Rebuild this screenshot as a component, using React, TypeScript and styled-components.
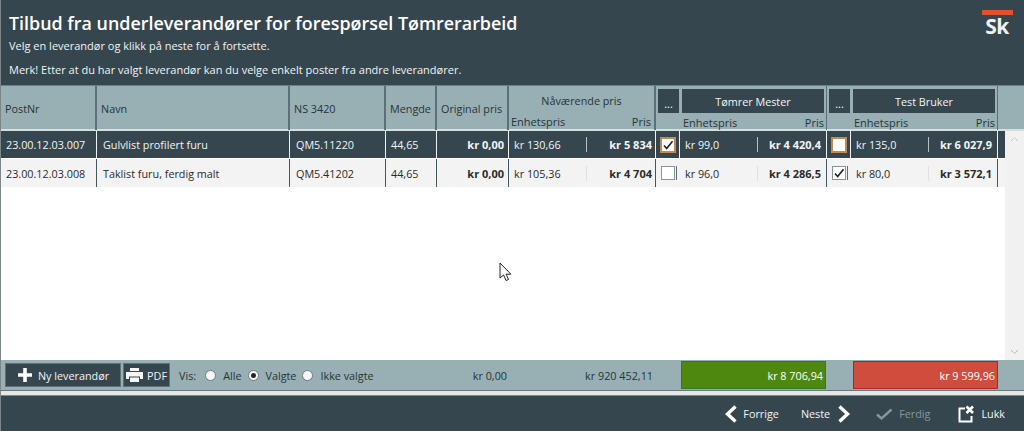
import React from "react";
import styled, { createGlobalStyle } from "styled-components";

const dark = "#36464e";
const teal = "#98b0b3";
const columns = "96px 193px 96px 51px 72px 147px 171px 171px";

const Global = createGlobalStyle`
  html, body { margin: 0; padding: 0; background: #fff; }
  body { font-family: "Open Sans", "Noto Sans", "Liberation Sans", sans-serif; font-size: 10.8px; color: #222; }
  * { box-sizing: border-box; }
`;

const Page = styled.div`
  position: relative; width: 1024px; height: 431px; display: flex; flex-direction: column;
  overflow: hidden; border-left: 1px solid #7c8588;
`;

const Header = styled.header`
  height: 86px; flex: none; background: ${dark}; color: #fff; display: flex; justify-content: space-between;
  padding: 11px 12px 0 8px; border-bottom: 1px solid #6f7f85;
`;
const Title = styled.h1`margin: 0; font-size: 17.9px; line-height: 24px; font-weight: 600;`;
const Lead = styled.p`margin: ${p => p.$gap}px 0 0; font-size: 11px; line-height: 14px; color: #f0f3f3;`;
const Logo = styled.div`width: 30px; display: flex; flex-direction: column; align-items: center; margin-top: -1px;`;
const LogoBar = styled.div`width: 31px; height: 5px; background: #e2512a; flex: none;`;
const LogoText = styled.span`font-size: 21px; line-height: 22px; font-weight: 700; color: #eef1f1; letter-spacing: -0.5px;`;

const HeadRow = styled.div`
  height: 45px; flex: none; background: ${teal}; display: grid; grid-template-columns: ${columns};
  border-bottom: 2px solid #d6dfe0;
`;
const HeadCell = styled.div`
  border-right: 2px solid #5d7078; display: flex; align-items: center; padding-left: ${p => p.$pad ?? 5}px; color: #26343a; white-space: nowrap;
`;
const PriceHead = styled.div`
  border-right: 2px solid #5d7078; display: flex; flex-direction: column; padding: 2px 1px 0 2px;
  &:nth-last-child(1), &:nth-last-child(2) { border-right-width: 1px; }
`;
const PriceTitle = styled.div`height: 24px; display: flex; align-items: center; justify-content: center; color: #26343a; padding-right: 1px;`;
const ButtonRow = styled.div`height: 24px; display: flex; gap: 3px; margin-top: 1px;`;
const DotsButton = styled.div`width: 21px; background: ${dark}; color: #fff; font-weight: 500; display: flex; align-items: center; justify-content: center; padding-top: 4px; flex: none;`;
const NameButton = styled.div`flex: 1; margin-right: 1px; background: ${dark}; color: #f2f5f5; display: flex; align-items: center; justify-content: center;`;
const Sub = styled.div`
  display: flex; justify-content: space-between; padding: 0 ${p => p.$right}px 0 ${p => p.$left}px; line-height: 14px; color: #26343a; margin-top: 3px; font-size: 11px;
`;

const Body = styled.div`flex: 1; min-height: 0; display: flex; background: #fff;`;
const Rows = styled.div`width: 1004px; flex: none; display: flex; flex-direction: column;`;
const Row = styled.div`
  height: ${p => p.$h}px; display: grid; grid-template-columns: ${columns}; width: 100%;
  background: ${p => (p.$selected ? dark : "#f3f3f3")}; color: ${p => (p.$selected ? "#f2f5f5" : "#2b2b2b")};
  --sep: ${p => (p.$selected ? "#f0f3f3" : "#44565e")};
  --inner: ${p => (p.$selected ? "#b6c0c3" : "#e0e2e2")};
  --check-sep: ${p => (p.$selected ? "#f0f3f3" : "transparent")};
  border-bottom: 1px solid #fff;
`;
const Cell = styled.div`
  border-right: 1px solid var(--sep); display: flex; align-items: center; padding: 0 ${p => p.$right ?? 0}px 0 ${p => p.$left ?? 6}px;
  justify-content: ${p => (p.$end ? "flex-end" : "flex-start")}; font-weight: ${p => (p.$end ? 700 : 400)}; font-size: ${p => (p.$end ? 11 : 10.8)}px; white-space: nowrap;
`;
const PriceCell = styled(Cell)`padding: 0; display: grid; grid-template-columns: ${p => p.$check ? "24px " : ""}${p => p.$unit}px 1fr; font-size: 10.8px;`;
const Unit = styled.div`height: 15px; align-self: center; display: flex; align-items: center; padding-left: 5px; border-right: 1px solid var(--inner); white-space: nowrap;`;
const Price = styled.div`display: flex; align-items: center; justify-content: flex-end; padding-right: ${p => p.$right}px; font-weight: 700; font-size: 11px; white-space: nowrap;`;
const CheckWrap = styled.div`display: flex; align-items: center; padding-left: ${p => (p.$accent ? 4 : 5)}px; border-right: 1px solid var(--check-sep); height: 100%;`;
const Box = styled.div`
  width: ${p => (p.$accent ? 16 : 14)}px; height: ${p => (p.$accent ? 16 : 14)}px;
  border: ${p => (p.$accent ? "2px solid #c08a55" : "1px solid #8b9498")}; background: #fff;
  box-shadow: ${p => (p.$accent ? "none" : "1px 0 0 #f3f3f3, 2px 0 0 #5d6d74")};
  display: flex; align-items: center; justify-content: center; color: #222; flex: none;
`;
const Scrollbar = styled.div`
  flex: none; width: 19px; background: #f1f1f1; display: flex; flex-direction: column; justify-content: space-between; align-items: center; padding: 5px 0;
`;

const Summary = styled.div`
  height: 31px; flex: none; background: ${teal}; display: grid; grid-template-columns: 507px 147px 172px 171px; border-bottom: 1px solid #66777d; color: #26343a;
`;
const Tools = styled.div`display: flex; align-items: center; padding-left: 4px;`;
const ToolButton = styled.div`
  height: 24px; width: ${p => p.$w}px; margin-right: 2px; background: ${dark}; color: #f2f5f5; border: 1px solid #5f7077;
  display: flex; align-items: center; justify-content: center; gap: ${p => p.$gap}px; flex: none;
`;
const VisLabel = styled.span`margin: 0 9px 0 7px;`;
const RadioItem = styled.label`display: flex; align-items: center; gap: 7px; margin-right: 6px;`;
const Radio = styled.span`
  width: 11px; height: 11px; border-radius: 50%; background: #f7f7f7; border: 1px solid #6e7b80; display: flex; align-items: center; justify-content: center;
  &::after { content: ""; width: 5px; height: 5px; border-radius: 50%; background: ${p => (p.$on ? "#222" : "transparent")}; }
`;
const Total = styled.div`display: flex; align-items: center; justify-content: flex-end; padding-right: ${p => p.$right}px;`;
const ToolsTotal = styled(Total)`flex: 1;`;
const Chip = styled.div`
  margin: 1px 0 1px 26px; width: 145px; color: #fff; display: flex; align-items: center; justify-content: flex-end; padding-right: 2px;
  background: ${p => p.$bg}; border: 1px solid ${p => p.$line};
`;

const Strip = styled.div`height: 5px; flex: none; background: #e3e8e5; border-bottom: 1px solid #7c8a8f;`;
const Actions = styled.div`
  height: 35px; flex: none; background: ${dark}; display: flex; justify-content: flex-end; align-items: center; padding: 0 19px 0 0; font-weight: 500; font-size: 10.8px;
`;
const Action = styled.div`display: flex; align-items: center; gap: ${p => p.$inner ?? 6}px; margin-left: ${p => p.$gap ?? 0}px; color: ${p => (p.$off ? "#84979c" : "#f2f5f5")};`;
const Cursor = styled.svg`position: absolute; left: 498px; top: 262px;`;

const Tick = () => (
  <svg width="12" height="12" viewBox="0 0 12 12"><path d="M2 6.5 4.7 9.5 10.5 2.2" fill="none" stroke="#222" strokeWidth="1.7" /></svg>
);
const Chev = ({ dir }: { dir: "l" | "r" }) => (
  <svg width="14" height="18" viewBox="0 0 14 18">
    <path d={dir === "l" ? "M11.5 1.5 3.5 9l8 7.5" : "M2.5 1.5l8 7.5-8 7.5"} fill="none" stroke="#fff" strokeWidth="3.4" />
  </svg>
);
const Printer = () => (
  <svg width="17" height="14" viewBox="0 0 17 14">
    <path d="M4 0h9v3H4z" fill="#f5f7f7" />
    <path d="M0 4h17v7h-3V8.5H3V11H0z" fill="#f5f7f7" />
    <path d="M4 9.5h9V14H4z" fill="#f5f7f7" />
  </svg>
);

const suppliers = [{ name: "Tømrer Mester" }, { name: "Test Bruker" }];
const rows = [
  { selected: true, h: 28, post: "23.00.12.03.007", name: "Gulvlist profilert furu", ns: "QM5.11220", cur: ["kr 130,66", "kr 5 834"],
    s: [{ u: "kr 99,0", p: "kr 4 420,4", c: true }, { u: "kr 135,0", p: "kr 6 027,9", c: false }] },
  { selected: false, h: 29, post: "23.00.12.03.008", name: "Taklist furu, ferdig malt", ns: "QM5.41202", cur: ["kr 105,36", "kr 4 704"],
    s: [{ u: "kr 96,0", p: "kr 4 286,5", c: false }, { u: "kr 80,0", p: "kr 3 572,1", c: true }] },
];

export default function App() {
  return (
    <Page>
      <Global />
      <Header>
        <div>
          <Title>Tilbud fra underleverandører for forespørsel Tømrerarbeid</Title>
          <Lead $gap={4}>Velg en leverandør og klikk på neste for å fortsette.</Lead>
          <Lead $gap={10}>Merk! Etter at du har valgt leverandør kan du velge enkelt poster fra andre leverandører.</Lead>
        </div>
        <Logo>
          <LogoBar />
          <LogoText>Sk</LogoText>
        </Logo>
      </Header>
      <HeadRow>
        <HeadCell $pad={4}>PostNr</HeadCell>
        <HeadCell $pad={4}>Navn</HeadCell>
        <HeadCell $pad={4}>NS 3420</HeadCell>
        <HeadCell $pad={4}>Mengde</HeadCell>
        <HeadCell $pad={4}>Original pris</HeadCell>
        <PriceHead>
          <PriceTitle>Nåværende pris</PriceTitle>
          <Sub $left={0} $right={2}><span>Enhetspris</span><span>Pris</span></Sub>
        </PriceHead>
        {suppliers.map(s => (
          <PriceHead key={s.name}>
            <ButtonRow>
              <DotsButton>...</DotsButton>
              <NameButton>{s.name}</NameButton>
            </ButtonRow>
            <Sub $left={25} $right={1}><span>Enhetspris</span><span>Pris</span></Sub>
          </PriceHead>
        ))}
      </HeadRow>
      <Body>
        <Rows>
          {rows.map(r => (
            <Row key={r.post} $selected={r.selected} $h={r.h}>
              <Cell $left={5}>{r.post}</Cell>
              <Cell $left={6}>{r.name}</Cell>
              <Cell $left={6}>{r.ns}</Cell>
              <Cell $left={5}>44,65</Cell>
              <Cell $end $right={4} $left={0}>kr 0,00</Cell>
              <PriceCell $unit={78}>
                <Unit>{r.cur[0]}</Unit>
                <Price $right={3}>{r.cur[1]}</Price>
              </PriceCell>
              {r.s.map((x, i) => (
                <PriceCell key={i} $check $unit={78}>
                  <CheckWrap $accent={r.selected}>
                    <Box $accent={r.selected}>{x.c && <Tick />}</Box>
                  </CheckWrap>
                  <Unit>{x.u}</Unit>
                  <Price $right={5}>{x.p}</Price>
                </PriceCell>
              ))}
            </Row>
          ))}
        </Rows>
        <Scrollbar>
          <svg width="9" height="6" viewBox="0 0 9 6"><path d="M1 5l3.5-3.5L8 5" fill="none" stroke="#c8c8c8" strokeWidth="1" /></svg>
          <svg width="9" height="6" viewBox="0 0 9 6"><path d="M1 1l3.5 3.5L8 1" fill="none" stroke="#b8b8b8" strokeWidth="1" /></svg>
        </Scrollbar>
      </Body>
      <Summary>
        <Tools>
          <ToolButton $w={116} $gap={5}>
            <svg width="16" height="16" viewBox="0 0 16 16"><path d="M8 1v14M1 8h14" stroke="#fff" strokeWidth="3.6" fill="none" /></svg>
            Ny leverandør
          </ToolButton>
          <ToolButton $w={47} $gap={4}>
            <Printer />
            PDF
          </ToolButton>
          <VisLabel>Vis:</VisLabel>
          <RadioItem><Radio />Alle</RadioItem>
          <RadioItem><Radio $on />Valgte</RadioItem>
          <RadioItem><Radio />Ikke valgte</RadioItem>
          <ToolsTotal $right={1}>kr 0,00</ToolsTotal>
        </Tools>
        <Total $right={2}>kr 920 452,11</Total>
        <Chip $bg="#4e880f" $line="#2f7a2a">kr 8 706,94</Chip>
        <Chip $bg="#d04c3d" $line="#a8262a">kr 9 599,96</Chip>
      </Summary>
      <Strip />
      <Actions>
        <Action $inner={5}><Chev dir="l" />Forrige</Action>
        <Action $gap={22} $inner={7}>Neste<Chev dir="r" /></Action>
        <Action $gap={25} $off>
          <svg width="17" height="12" viewBox="0 0 17 12"><path d="M1 6.5 5.5 10.5 15.5 1.5" fill="none" stroke="#84979c" strokeWidth="2.4" /></svg>
          Ferdig
        </Action>
        <Action $gap={28} $inner={5}>
          <svg width="18" height="18" viewBox="0 0 18 18">
            <path d="M7 3.5H1.5v13h12V11" fill="none" stroke="#fff" strokeWidth="2" />
            <path d="M8.5 1.5l6.5 6.5M15 1.5 8.5 8" stroke="#fff" strokeWidth="2.6" fill="none" />
          </svg>
          Lukk
        </Action>
      </Actions>
      <Cursor width="14" height="20" viewBox="0 0 14 20">
        <path d="M1 1v15l3.6-3 2.4 5.5 2.5-1-2.4-5.3h4.8z" fill="#fff" stroke="#222" strokeWidth="1" />
      </Cursor>
    </Page>
  );
}
